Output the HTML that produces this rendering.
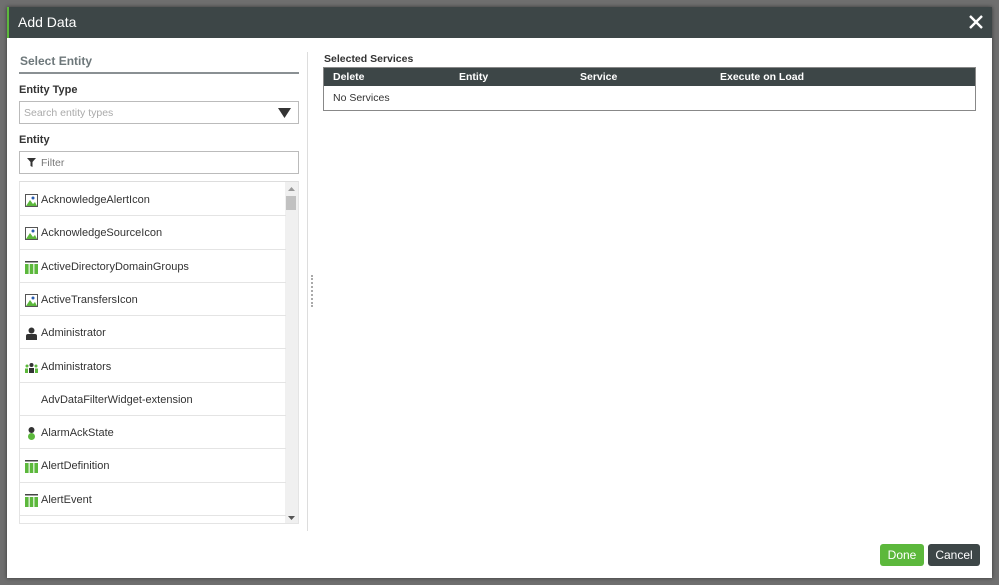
<!DOCTYPE html>
<html><head><style>
*{box-sizing:border-box;margin:0;padding:0}
body{width:999px;height:585px;background:#6f6f6f;font-family:"Liberation Sans",sans-serif;position:relative;overflow:hidden;font-size:11px;color:#333}
.dlg{position:absolute;left:7px;top:7px;width:985px;height:571px;background:#fff;box-shadow:0 0 4px rgba(0,0,0,.5)}
.hdr{height:31px;background:#3d4647;color:#fff;font-size:14px;line-height:31px;padding-left:9px;border-left:2px solid #5cb83c}
.x{position:absolute;right:7px;top:6px;width:18px;height:18px}
.abs{position:absolute}
.lbl{font-weight:bold;font-size:11px;color:#333}
.inp{position:absolute;border:1px solid #bbb;background:#fff}
.row{position:absolute;left:0;width:266px;height:33.3px;border-bottom:1px solid #e4e4e4;line-height:35px;padding-left:21px;font-size:11px}
.ic{position:absolute;left:5px;top:11px;width:13px;height:13px}
.btn{position:absolute;height:22px;border-radius:3px;color:#fff;font-size:12px;line-height:22px;text-align:center}
</style></head><body>
<div class="dlg">
<div class="hdr">Add Data</div>
<svg class="x" viewBox="0 0 18 18"><path d="M3 3L15 15M15 3L3 15" stroke="#fff" stroke-width="2.4"/></svg>
<div class="abs" style="left:13px;top:47px;font-size:12px;font-weight:bold;color:#6d777a">Select Entity</div>
<div class="abs" style="left:12px;top:65px;width:280px;height:2px;background:#8a9093"></div>
<div class="abs lbl" style="left:12px;top:77px">Entity Type</div>
<div class="inp" style="left:12px;top:94px;width:280px;height:23px"><span style="position:absolute;left:4px;top:5px;color:#aaa;font-size:10.5px">Search entity types</span><svg style="position:absolute;right:7px;top:6px" width="13" height="10"><path d="M0 0H13L6.5 10Z" fill="#333"/></svg></div>
<div class="abs lbl" style="left:12px;top:127px">Entity</div>
<div class="inp" style="left:12px;top:144px;width:280px;height:23px"><svg style="position:absolute;left:7px;top:6px" width="9" height="9"><path d="M0 0H9L5.5 4V9L3.5 8V4Z" fill="#333"/></svg><span style="position:absolute;left:21px;top:5px;color:#777;font-size:10.5px">Filter</span></div>
<div class="abs" style="left:12px;top:174px;width:280px;height:343px;border:1px solid #e4e4e4;border-top:1px solid #ddd;overflow:hidden">
 <div class="abs" style="right:0;top:0;width:13px;height:343px;background:#f0f0f0"></div>
 <div class="abs" style="right:2px;top:14px;width:10px;height:14px;background:#c1c1c1"></div>
 <svg class="abs" style="right:3px;top:5px" width="7" height="4"><path d="M0 4H7L3.5 0Z" fill="#999"/></svg>
 <svg class="abs" style="right:3px;top:334px" width="7" height="4"><path d="M0 0H7L3.5 4Z" fill="#555"/></svg>
 <div class="row" style="top:1px"><svg class="ic" viewBox="0 0 13 13"><rect x=".5" y=".5" width="12" height="12" fill="#fff" stroke="#555"/><path d="M1 12L5 6L8 10L10 8L12 12Z" fill="#5cb83c"/><circle cx="8" cy="4" r="1.5" fill="#2a5db0"/></svg>AcknowledgeAlertIcon</div>
 <div class="row" style="top:34.3px"><svg class="ic" viewBox="0 0 13 13"><rect x=".5" y=".5" width="12" height="12" fill="#fff" stroke="#555"/><path d="M1 12L5 6L8 10L10 8L12 12Z" fill="#5cb83c"/><circle cx="8" cy="4" r="1.5" fill="#2a5db0"/></svg>AcknowledgeSourceIcon</div>
 <div class="row" style="top:67.6px"><svg class="ic" viewBox="0 0 13 13"><rect x="0" y="0" width="13" height="1.5" fill="#444"/><rect x="0" y="3" width="3.6" height="10" fill="#5cb83c"/><rect x="4.7" y="3" width="3.6" height="10" fill="#5cb83c"/><rect x="9.4" y="3" width="3.6" height="10" fill="#5cb83c"/></svg>ActiveDirectoryDomainGroups</div>
 <div class="row" style="top:100.9px"><svg class="ic" viewBox="0 0 13 13"><rect x=".5" y=".5" width="12" height="12" fill="#fff" stroke="#555"/><path d="M1 12L5 6L8 10L10 8L12 12Z" fill="#5cb83c"/><circle cx="8" cy="4" r="1.5" fill="#2a5db0"/></svg>ActiveTransfersIcon</div>
 <div class="row" style="top:134.2px"><svg class="ic" viewBox="0 0 13 13"><circle cx="6.5" cy="3.5" r="3" fill="#333"/><path d="M1 13V9Q1 7 3 7H10Q12 7 12 9V13Z" fill="#333"/></svg>Administrator</div>
 <div class="row" style="top:167.5px"><svg class="ic" viewBox="0 0 13 13"><circle cx="6.5" cy="4" r="2" fill="#333"/><rect x="4" y="7" width="5" height="5" fill="#333"/><circle cx="2" cy="5" r="1.5" fill="#5cb83c"/><rect x="0" y="7.5" width="3" height="4.5" fill="#5cb83c"/><circle cx="11" cy="5" r="1.5" fill="#5cb83c"/><rect x="10" y="7.5" width="3" height="4.5" fill="#5cb83c"/></svg>Administrators</div>
 <div class="row" style="top:200.8px">AdvDataFilterWidget-extension</div>
 <div class="row" style="top:234.1px"><svg class="ic" viewBox="0 0 13 13"><circle cx="6.5" cy="3" r="3" fill="#333"/><circle cx="6.5" cy="9.5" r="3.5" fill="#5cb83c"/></svg>AlarmAckState</div>
 <div class="row" style="top:267.4px"><svg class="ic" viewBox="0 0 13 13"><rect x="0" y="0" width="13" height="1.5" fill="#444"/><rect x="0" y="3" width="3.6" height="10" fill="#5cb83c"/><rect x="4.7" y="3" width="3.6" height="10" fill="#5cb83c"/><rect x="9.4" y="3" width="3.6" height="10" fill="#5cb83c"/></svg>AlertDefinition</div>
 <div class="row" style="top:300.7px"><svg class="ic" viewBox="0 0 13 13"><rect x="0" y="0" width="13" height="1.5" fill="#444"/><rect x="0" y="3" width="3.6" height="10" fill="#5cb83c"/><rect x="4.7" y="3" width="3.6" height="10" fill="#5cb83c"/><rect x="9.4" y="3" width="3.6" height="10" fill="#5cb83c"/></svg>AlertEvent</div>
</div>
<div class="abs" style="left:300px;top:45px;width:1px;height:479px;background:#ddd"></div>
<div class="abs" style="left:304px;top:268px;width:3px;height:32px;border-left:2px dotted #aaa"></div>
<div class="abs lbl" style="left:317px;top:46px;font-size:10.5px">Selected Services</div>
<div class="abs" style="left:316px;top:60px;width:653px;height:44px;border:1px solid #888">
 <div style="height:18px;background:#3d4647;color:#fff;font-weight:bold;font-size:10.5px;line-height:18px;position:relative">
  <span class="abs" style="left:9px">Delete</span><span class="abs" style="left:135px">Entity</span><span class="abs" style="left:256px">Service</span><span class="abs" style="left:396px">Execute on Load</span>
 </div>
 <div style="padding-left:9px;line-height:24px;font-size:10.5px">No Services</div>
</div>
<div class="btn" style="left:873px;top:537px;width:44px;background:#5cb83c">Done</div>
<div class="btn" style="left:921px;top:537px;width:52px;background:#3d4647">Cancel</div>
</div>
</body></html>
